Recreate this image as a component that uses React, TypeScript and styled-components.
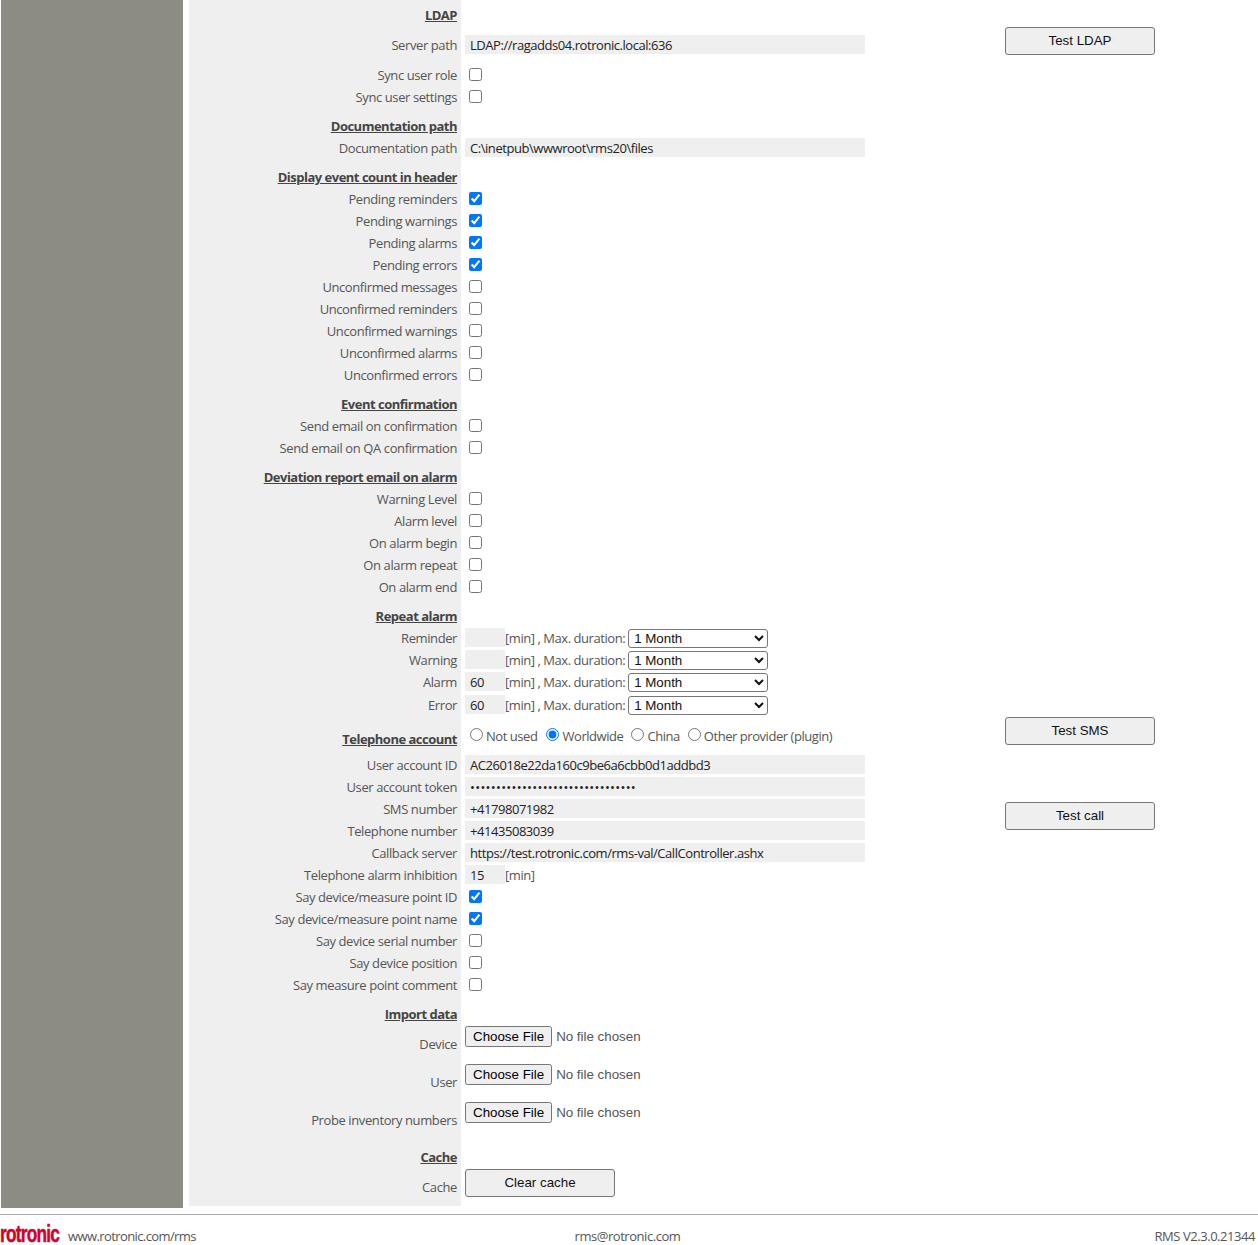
import styled, { createGlobalStyle } from "styled-components";

const GlobalStyle = createGlobalStyle`
  html, body {
    margin: 0;
    padding: 0;
    background: #fff;
    overflow: hidden;
  }
  body {
    font-family: "Open Sans", "Noto Sans", sans-serif;
    font-size: 13px;
    color: #555;
  }
`;

const Shell = styled.div`
  display: flex;
  align-items: flex-start;
  padding-left: 1px;
`;

const Sidebar = styled.aside`
  flex: none;
  width: 182px;
  height: 1208px;
  background: #8c8c84;
`;

const Form = styled.main`
  flex: none;
  width: 816px;
  margin-left: 6px;
`;

const Row = styled.div<{ $height?: number }>`
  display: flex;
  height: ${(p) => p.$height ?? 22}px;
`;

const LabelCell = styled.div<{ $pad?: number }>`
  flex: none;
  box-sizing: border-box;
  width: 272px;
  padding: ${(p) => p.$pad ?? 0}px 4px 0 0;
  background: #efefef;
  text-align: right;
  line-height: 22px;
  letter-spacing: -0.4px;
  white-space: nowrap;
`;

const Heading = styled(LabelCell)`
  font-weight: 700;
  color: #444;
  letter-spacing: -0.5px;
  text-decoration: underline;
`;

const ValueCell = styled.div<{ $pad?: number }>`
  display: flex;
  align-items: flex-start;
  padding: ${(p) => p.$pad ?? 0}px 0 0 4px;
  line-height: 22px;
  letter-spacing: -0.45px;
  white-space: nowrap;
`;

const TextInput = styled.input<{ $width?: number }>`
  box-sizing: border-box;
  width: ${(p) => p.$width ?? 400}px;
  height: 19px;
  margin: 1px 0 0;
  padding: 0 0 0 5px;
  border: 0;
  outline: 0;
  background: #efefef;
  color: #222;
  font-family: "Open Sans", "Noto Sans", sans-serif;
  font-size: 13px;
  letter-spacing: -0.45px;
`;

const PasswordInput = styled(TextInput).attrs({ type: "password" })`
  letter-spacing: 0.3px;
`;

const Check = styled.input.attrs({ type: "checkbox" })`
  width: 13px;
  height: 13px;
  margin: 4px 0 0 4px;
`;

const Radio = styled.input.attrs({ type: "radio" })`
  width: 13px;
  height: 13px;
  margin: 0 3px 4px 0;
`;

const RadioLabel = styled.label<{ $left: number }>`
  display: inline-flex;
  align-items: center;
  margin-left: ${(p) => p.$left}px;
`;

const Select = styled.select`
  box-sizing: border-box;
  width: 140px;
  height: 19px;
  margin: 2px 0 0 3px;
  padding-left: 1px;
  border: 1px solid #767676;
  border-radius: 3px;
  font-family: "Liberation Sans", Arial, sans-serif;
  font-size: 13.333px;
  color: #111;
  background: #fff;
`;

const FileInput = styled.input.attrs({ type: "file" })`
  font-family: "Liberation Sans", Arial, sans-serif;
  font-size: 13.333px;
  color: #555;
  letter-spacing: 0;
`;

const ActionColumn = styled.div`
  flex: none;
  display: flex;
  flex-direction: column;
`;

const ActionButton = styled.button<{ $top?: number }>`
  box-sizing: border-box;
  width: 150px;
  height: 28px;
  margin-top: ${(p) => p.$top ?? 0}px;
  padding: 0 0 1px;
  border: 1px solid #767676;
  border-radius: 3px;
  background: #efefef;
  color: #111;
  font-family: "Liberation Sans", Arial, sans-serif;
  font-size: 13.333px;
  letter-spacing: 0;
`;

const Footer = styled.footer`
  box-sizing: border-box;
  display: grid;
  grid-template-columns: 1fr auto 1fr;
  align-items: center;
  height: 31px;
  margin-top: 6px;
  border-top: 1px solid #aaa;
  padding: 12px 3px 0 0;
  font-size: 13px;
  line-height: 18px;
  letter-spacing: -0.45px;
`;

const Brand = styled.div`
  display: flex;
  align-items: center;
  letter-spacing: -0.6px;
`;

const Logo = styled.span`
  display: inline-block;
  width: 60px;
  height: 18px;
  margin: -5px 8px 0 0;
  font-family: "Liberation Sans", Arial, sans-serif;
  font-size: 23px;
  font-weight: 700;
  line-height: 18px;
  letter-spacing: -1px;
  color: #d4002a;
  -webkit-text-stroke: 0.5px #d4002a;
  transform: scaleX(0.75);
  transform-origin: left center;
  white-space: nowrap;
`;

const FooterRight = styled.div`
  text-align: right;
`;

const CheckRow = ({ label, checked }: { label: string; checked?: boolean }) => (
  <Row>
    <LabelCell>{label}</LabelCell>
    <ValueCell>
      <Check defaultChecked={checked} />
    </ValueCell>
  </Row>
);

const Section = ({ title, height = 29, pad = 7 }: { title: string; height?: number; pad?: number }) => (
  <Row $height={height}>
    <Heading $pad={pad}>{title}</Heading>
  </Row>
);

const TextRow = ({ label, value }: { label: string; value: string }) => (
  <Row>
    <LabelCell>{label}</LabelCell>
    <ValueCell>
      <TextInput defaultValue={value} />
    </ValueCell>
  </Row>
);

const RepeatRow = ({ label, value, height }: { label: string; value: string; height?: number }) => (
  <Row $height={height}>
    <LabelCell>{label}</LabelCell>
    <ValueCell>
      <TextInput $width={40} defaultValue={value} />
      [min] , Max. duration:
      <Select defaultValue="1 Month">
        <option>1 Month</option>
      </Select>
    </ValueCell>
  </Row>
);

const FileRow = ({ label }: { label: string }) => (
  <Row $height={38}>
    <LabelCell $pad={8}>{label}</LabelCell>
    <ValueCell $pad={1}>
      <FileInput />
    </ValueCell>
  </Row>
);

const App = () => {
  return (
    <>
      <GlobalStyle />
      <Shell>
        <Sidebar />
        <Form>
          <Section title="LDAP" height={26} pad={4} />
          <Row $height={38}>
            <LabelCell $pad={8}>Server path</LabelCell>
            <ValueCell $pad={8}>
              <TextInput defaultValue="LDAP://ragadds04.rotronic.local:636" />
            </ValueCell>
          </Row>
          <CheckRow label="Sync user role" />
          <CheckRow label="Sync user settings" />

          <Section title="Documentation path" />
          <TextRow label="Documentation path" value="C:\inetpub\wwwroot\rms20\files" />

          <Section title="Display event count in header" />
          <CheckRow label="Pending reminders" checked />
          <CheckRow label="Pending warnings" checked />
          <CheckRow label="Pending alarms" checked />
          <CheckRow label="Pending errors" checked />
          <CheckRow label="Unconfirmed messages" />
          <CheckRow label="Unconfirmed reminders" />
          <CheckRow label="Unconfirmed warnings" />
          <CheckRow label="Unconfirmed alarms" />
          <CheckRow label="Unconfirmed errors" />

          <Section title="Event confirmation" />
          <CheckRow label="Send email on confirmation" />
          <CheckRow label="Send email on QA confirmation" />

          <Section title="Deviation report email on alarm" />
          <CheckRow label="Warning Level" />
          <CheckRow label="Alarm level" />
          <CheckRow label="On alarm begin" />
          <CheckRow label="On alarm repeat" />
          <CheckRow label="On alarm end" />

          <Section title="Repeat alarm" />
          <RepeatRow label="Reminder" value="" />
          <RepeatRow label="Warning" value="" />
          <RepeatRow label="Alarm" value="60" height={23} />
          <RepeatRow label="Error" value="60" />

          <Row $height={38}>
            <Heading $pad={12}>Telephone account</Heading>
            <ValueCell $pad={9}>
              <RadioLabel $left={5}>
                <Radio name="provider" />
                Not used
              </RadioLabel>
              <RadioLabel $left={9}>
                <Radio name="provider" defaultChecked />
                Worldwide
              </RadioLabel>
              <RadioLabel $left={8}>
                <Radio name="provider" />
                China
              </RadioLabel>
              <RadioLabel $left={8}>
                <Radio name="provider" />
                Other provider (plugin)
              </RadioLabel>
            </ValueCell>
          </Row>
          <TextRow label="User account ID" value="AC26018e22da160c9be6a6cbb0d1addbd3" />
          <Row>
            <LabelCell>User account token</LabelCell>
            <ValueCell>
              <PasswordInput defaultValue="12345678901234567890123456789012" />
            </ValueCell>
          </Row>
          <TextRow label="SMS number" value="+41798071982" />
          <TextRow label="Telephone number" value="+41435083039" />
          <TextRow label="Callback server" value="https://test.rotronic.com/rms-val/CallController.ashx" />
          <Row>
            <LabelCell>Telephone alarm inhibition</LabelCell>
            <ValueCell>
              <TextInput $width={40} defaultValue="15" />
              [min]
            </ValueCell>
          </Row>
          <CheckRow label="Say device/measure point ID" checked />
          <CheckRow label="Say device/measure point name" checked />
          <CheckRow label="Say device serial number" />
          <CheckRow label="Say device position" />
          <CheckRow label="Say measure point comment" />

          <Section title="Import data" />
          <FileRow label="Device" />
          <FileRow label="User" />
          <FileRow label="Probe inventory numbers" />

          <Section title="Cache" />
          <Row $height={38}>
            <LabelCell $pad={8}>Cache</LabelCell>
            <ValueCell $pad={1}>
              <ActionButton>Clear cache</ActionButton>
            </ValueCell>
          </Row>
        </Form>
        <ActionColumn>
          <ActionButton $top={27}>Test LDAP</ActionButton>
          <ActionButton $top={662}>Test SMS</ActionButton>
          <ActionButton $top={57}>Test call</ActionButton>
        </ActionColumn>
      </Shell>
      <Footer>
        <Brand>
          <Logo>rotronic</Logo>
          www.rotronic.com/rms
        </Brand>
        <div>rms@rotronic.com</div>
        <FooterRight>RMS V2.3.0.21344</FooterRight>
      </Footer>
    </>
  );
};

export default App;
